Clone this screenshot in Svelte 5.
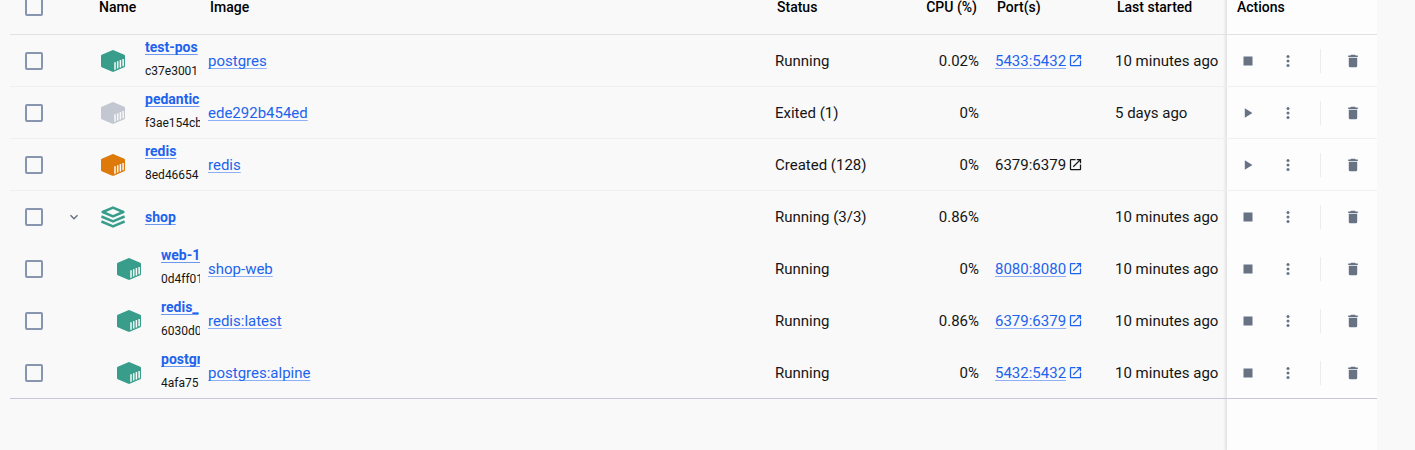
<script>
  const rows = [
    { name: 'test-pos', id: 'c37e3001', image: 'postgres', status: 'Running', cpu: '0.02%', port: '5433:5432', started: '10 minutes ago', tone: 'green', running: true },
    { name: 'pedantic', id: 'f3ae154cb', image: 'ede292b454ed', status: 'Exited (1)', cpu: '0%', port: '', started: '5 days ago', tone: 'grey', running: false },
    { name: 'redis', id: '8ed46654', image: 'redis', status: 'Created (128)', cpu: '0%', port: '6379:6379', started: '', tone: 'orange', running: false },
    { name: 'shop', id: '', image: '', status: 'Running (3/3)', cpu: '0.86%', port: '', started: '10 minutes ago', tone: 'green', running: true, group: true },
    { name: 'web-1', id: '0d4ff01', image: 'shop-web', status: 'Running', cpu: '0%', port: '8080:8080', started: '10 minutes ago', tone: 'green', running: true, child: true },
    { name: 'redis_', id: '6030d0', image: 'redis:latest', status: 'Running', cpu: '0.86%', port: '6379:6379', started: '10 minutes ago', tone: 'green', running: true, child: true },
    { name: 'postgr', id: '4afa75', image: 'postgres:alpine', status: 'Running', cpu: '0%', port: '5432:5432', started: '10 minutes ago', tone: 'green', running: true, child: true }
  ];
</script>

{#snippet external()}
  <svg class="external" viewBox="0 0 24 24" aria-hidden="true"><path fill="currentColor" d="M19 19H5V5h7V3H5a2 2 0 0 0-2 2v14a2 2 0 0 0 2 2h14c1.100 0 2-.9 2-2v-7h-2zM14 3v2h3.590l-9.830 9.830 1.410 1.410L19 6.410V10h2V3z" /></svg>
{/snippet}

<main>
  <div class="grid">
    <table>
      <colgroup>
        <col class="c-check" /><col class="c-expand" /><col class="c-name" /><col /><col class="c-status" />
        <col class="c-cpu" /><col class="c-port" /><col class="c-started" /><col class="c-actions" />
      </colgroup>
      <thead>
        <tr>
          <th class="check"><input type="checkbox" aria-label="Select all" /></th>
          <td></td>
          <th class="name">Name</th>
          <th>Image</th>
          <th>Status</th>
          <th class="cpu">CPU (%)</th>
          <th>Port(s)</th>
          <th>Last started</th>
          <th>Actions</th>
        </tr>
      </thead>
      <tbody>
        {#each rows as row}
          <tr class:joined={row.group || row.child}>
            <td class="check"><input type="checkbox" aria-label={`Select ${row.name}`} /></td>
            <td class="expand">
              {#if row.group}
                <button aria-label="Collapse" aria-expanded="true">
                  <svg width="16" height="16" viewBox="0 0 16 16" fill="none" stroke="currentColor" stroke-width="1.500"><path d="M4.500 6.200 8 9.700l3.500-3.500" /></svg>
                </button>
              {/if}
            </td>
            <td class="name">
              <div class={['entry', row.child && 'child']}>
                <svg class={['kind', row.tone]} viewBox="0 0 24 22" aria-hidden="true">
                  {#if row.group}
                    <g fill="none" stroke="currentColor" stroke-width="2.600" stroke-linejoin="round">
                      <path d="M12 1.600 22.300 6 12 10.400 1.700 6z" />
                      <path d="M.4 10.500 12 15.400l11.600-4.900" />
                      <path d="M.4 15.500 12 20.400l11.600-4.900" />
                    </g>
                  {:else}
                    <path fill="currentColor" d="M11.300.3q.7-.4 1.400 0l10.600 4.500q.7.3.7 1v10.400q0 .7-.7 1l-10.600 4.500q-.7.300-1.400 0L.7 17.200q-.7-.3-.7-1V5.800q0-.7.700-1z" />
                    <path stroke="#f9f9f9" stroke-width="1.500" d="M14 12.300v7.400M16.700 11.200v7.400M19.400 10.100v7.400M22.100 9v7.300" />
                  {/if}
                </svg>
                <div class="label" class:single={row.group}>
                  <a href="#container">{row.name}</a>
                  {#if row.id}<span>{row.id}</span>{/if}
                </div>
              </div>
            </td>
            <td>{#if row.image}<a href="#image">{row.image}</a>{/if}</td>
            <td>{row.status}</td>
            <td class="cpu">{row.cpu}</td>
            <td>
              {#if row.port}
                <div class="port">
                  {#if row.started}<a href="#port">{row.port}</a>{:else}<span>{row.port}</span>{/if}
                  <span class:link={row.started}>{@render external()}</span>
                </div>
              {/if}
            </td>
            <td>{row.started}</td>
            <td class="actions">
              <div class="tools">
                <button aria-label={row.running ? 'Stop' : 'Start'}>
                  <svg width="16" height="16" viewBox="0 0 16 16" fill="currentColor">
                    {#if row.running}<path d="M3.500 3.500h9v9h-9z" />{:else}<path d="M4.800 3.300v9.400L12.400 8z" />{/if}
                  </svg>
                </button>
                <button aria-label="More">
                  <svg width="16" height="16" viewBox="0 0 16 16" fill="currentColor"><circle cx="8" cy="3.600" r="1.500" /><circle cx="8" cy="8" r="1.500" /><circle cx="8" cy="12.400" r="1.500" /></svg>
                </button>
                <i></i>
                <button aria-label="Delete">
                  <svg width="16" height="16" viewBox="0 0 16 16" fill="currentColor"><path d="M6 1.800h4l.6.700h2.200V4H3.200V2.500h2.200zM3.800 4.800h8.400v8q0 1.500-1.500 1.500H5.300q-1.500 0-1.500-1.500z" /></svg>
                </button>
              </div>
            </td>
          </tr>
        {/each}
      </tbody>
    </table>
  </div>
</main>

<style>
  :global(body) { margin: 0; background: #f9f9f9; }
  main {
    box-sizing: border-box;
    display: flex;
    min-height: 100vh;
    padding: 0 38px 0 10px;
    overflow: hidden;
    font-family: Roboto, sans-serif;
    font-size: 15px;
    line-height: 20px;
    color: #151515;
  }
  .grid {
    flex: 1;
    min-width: 0;
    background:
      linear-gradient(#fdfdfd, #fdfdfd) right / 150px 100% no-repeat,
      linear-gradient(to left, #e2e2e2, #f9f9f9) right 150px top / 4px 100% no-repeat;
  }
  table { width: 100%; margin-top: -21px; table-layout: fixed; border-collapse: separate; border-spacing: 0; }
  .c-check { width: 49px; }
  .c-expand { width: 32px; }
  .c-name { width: 109px; }
  .c-status { width: 130px; }
  .c-cpu { width: 90px; }
  .c-port { width: 120px; }
  .c-started { width: 120px; }
  .c-actions { width: 150px; }
  td, th {
    box-sizing: border-box;
    height: 52px;
    padding: 0 8px;
    border-bottom: 1px solid #f0f0f1;
    text-align: left;
    vertical-align: middle;
    white-space: nowrap;
  }
  thead td, thead th { height: 56px; padding: 0 10px; border-color: #e1e2e3; font-size: 14px; font-weight: 500; color: #000; }
  thead th.name { padding-left: 8px; }
  .joined td { border-color: transparent; }
  tbody tr:last-child td { border-color: #c6c8d9; }
  td.check, th.check { padding: 0 0 0 15px; }
  td.expand { padding: 0 0 0 7px; }
  td.name { padding: 0 0 0 10px; }
  td.cpu, th.cpu { text-align: right; }
  input {
    display: block;
    box-sizing: border-box;
    width: 18px;
    height: 18px;
    margin: 0;
    appearance: none;
    border: 2px solid #8795ae;
    border-radius: 2px;
  }
  a, .link { color: #1d63ed; }
  a { text-decoration: underline 1px #8fb0f4; text-underline-offset: 2px; text-decoration-skip-ink: none; }
  button { display: flex; padding: 0; border: 0; background: none; color: #677285; }
  .entry { display: flex; align-items: center; gap: 20px; overflow: hidden; }
  .entry.child { padding-left: 16px; }
  .kind { flex: none; width: 24px; height: 22px; }
  .green { color: #389e8b; }
  .grey { color: #c3c7d1; }
  .orange { color: #dd7a0a; }
  .label { display: flex; flex-direction: column; gap: 4px; min-width: 0; padding-bottom: 4px; overflow: hidden; font-size: 14px; }
  .label.single { padding-bottom: 0; }
  .label a { align-self: flex-start; font-weight: 700; text-decoration-color: #6d98f0; }
  .label span { font-size: 12px; }
  .port { display: flex; align-items: center; gap: 2px; }
  .external { display: block; width: 15px; height: 15px; }
  td.actions { padding: 0 0 0 13px; }
  .tools { display: flex; align-items: center; gap: 24px; }
  .tools i { width: 1px; height: 24px; background: #ececee; }
</style>
